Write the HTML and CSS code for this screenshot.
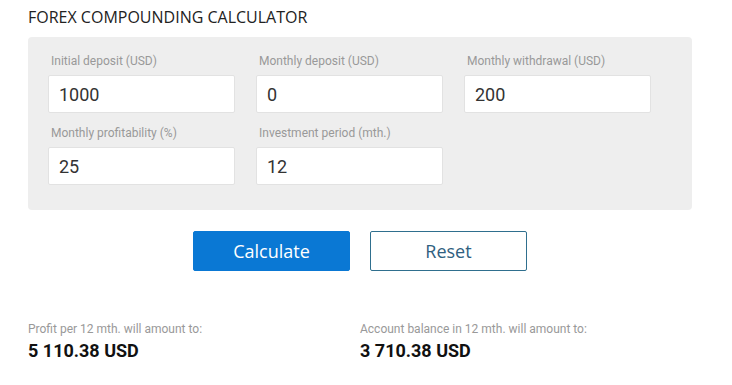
FILE: index.html
```html
<!DOCTYPE html>
<html lang="en">
<head>
  <meta charset="UTF-8">
  <title>Forex Compounding Calculator</title>
  <link rel="stylesheet" href="styles.css">
</head>
<body>

  <div class="calc">
    <h2>FOREX COMPOUNDING CALCULATOR</h2>

    <div class="panel">
      <div class="field">
        <label for="deposit">Initial deposit (USD)</label>
        <input type="text" id="deposit" value="1000">
      </div>
      <div class="field">
        <label for="monthly">Monthly deposit (USD)</label>
        <input type="text" id="monthly" value="0">
      </div>
      <div class="field">
        <label for="withdrawal">Monthly withdrawal (USD)</label>
        <input type="text" id="withdrawal" value="200">
      </div>
      <div class="field">
        <label for="profit">Monthly profitability (%)</label>
        <input type="text" id="profit" value="25">
      </div>
      <div class="field">
        <label for="period">Investment period (mth.)</label>
        <input type="text" id="period" value="12">
      </div>
    </div>

    <div class="buttons">
      <button class="btn-calc">Calculate</button>
      <button class="btn-reset">Reset</button>
    </div>

    <div class="results">
      <div class="result">
        <div class="result-label">Profit per 12 mth. will amount to:</div>
        <div class="result-value">5 110.38 USD</div>
      </div>
      <div class="result">
        <div class="result-label">Account balance in 12 mth. will amount to:</div>
        <div class="result-value">3 710.38 USD</div>
      </div>
    </div>
  </div>

</body>
</html>
```

FILE: styles.css
```css
body {
  margin: 0;
  background-color: #fff;
  font-family: Roboto, Arial, sans-serif;
}

.calc {
  width: 664px;
  padding: 0 28px;
}

h2 {
  margin: 6px 0 0;
  font-family: "Open Sans", Arial, sans-serif;
  font-size: 16px;
  font-weight: normal;
  line-height: 22px;
  color: #222;
}

.panel {
  margin-top: 9px;
  padding: 16px 20px 25px;
  background-color: #eeeeee;
  border-radius: 4px;
  display: grid;
  grid-template-columns: repeat(3, 187px);
  column-gap: 21px;
  row-gap: 12px;
}

.field label {
  display: block;
  padding-left: 3px;
  font-size: 12px;
  line-height: 16px;
  color: #999;
  margin-bottom: 6px;
}

.field input {
  box-sizing: border-box;
  width: 187px;
  height: 38px;
  padding: 0 10px;
  border: 1px solid #e2e2e2;
  border-radius: 2px;
  background-color: #fff;
  font-family: Roboto, Arial, sans-serif;
  font-size: 18px;
  color: #333;
  outline: none;
}

.buttons {
  display: flex;
  justify-content: center;
  gap: 20px;
  margin-top: 21px;
}

.buttons button {
  width: 157px;
  height: 40px;
  border-radius: 2px;
  font-family: "Open Sans", Arial, sans-serif;
  font-size: 18px;
  cursor: pointer;
}

.btn-calc {
  background-color: #0a78d4;
  border: 1px solid #0a78d4;
  color: #fff;
}

.btn-reset {
  background-color: #fff;
  border: 1px solid #2f6f8e;
  color: #2f6080;
}

.results {
  display: grid;
  grid-template-columns: 1fr 1fr;
  margin-top: 50px;
}

.result-label {
  font-size: 12px;
  line-height: 16px;
  color: #999;
}

.result-value {
  margin-top: 3px;
  font-size: 18px;
  font-weight: bold;
  line-height: 22px;
  color: #111;
}
```
